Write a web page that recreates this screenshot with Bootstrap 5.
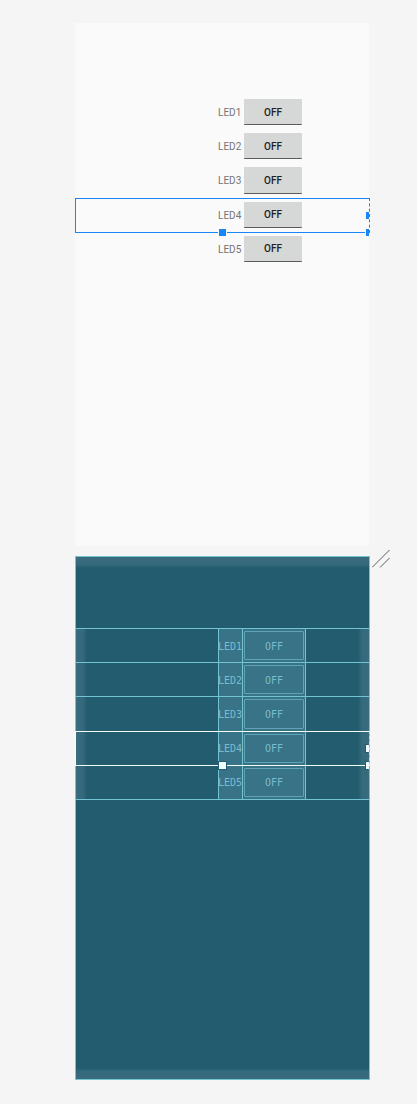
<!DOCTYPE html>
<html lang="en">
<head>
<meta charset="utf-8">
<meta name="viewport" content="width=device-width, initial-scale=1">
<title>Layout editor</title>
<link href="https://cdn.jsdelivr.net/npm/bootstrap@5.3.0/dist/css/bootstrap.min.css" rel="stylesheet">
<style>
body{background:#f5f5f5;font-family:Roboto,"Liberation Sans",sans-serif;font-size:10px;line-height:12px}
.editor{padding:23px 47px 24px 75px;gap:10px}
.surface{padding-top:72px}
.design{aspect-ratio:294/523;background:#fafafa;margin-right:1px;color:#757575}
.blueprint{aspect-ratio:295/524;background:#235c6e;border:1px solid #72c3d4;padding-top:71px;color:#78bdcd;font-family:"DejaVu Sans Mono",monospace}
.blueprint::before,.blueprint::after{content:"";position:absolute;left:0;right:0;height:11px;background:linear-gradient(#3a6b7d,#336a7c 70%,#235c6e)}
.blueprint::before{top:0}
.blueprint::after{bottom:0;transform:rotate(180deg)}
.led-rows{display:grid;grid-template-rows:repeat(5,1fr);height:171px}
.led-row{display:grid;grid-template-columns:143fr 25px 63px 63fr;position:relative;min-height:0}
.led-row label{grid-column:2;align-self:center;white-space:nowrap;padding-top:2px}
.led-row button{grid-column:3;border-radius:1px;font-size:10px;line-height:12px;padding:2px 0 0}
.design .led-row button{margin:4px 4px 4px 1px;border:0;border-bottom:1px solid #5c5a5b;background:#d6d7d7;color:#212121;font-weight:500}
.blueprint .led-rows{height:172px;border-bottom:1px solid #72c3d4}
.blueprint .led-row{border-top:1px solid #72c3d4;grid-template-columns:142fr 25px 63px 63fr;background:linear-gradient(90deg,#386c7e,#336a7c 7px,#235c6e 11px,#235c6e calc(100% - 11px),#336a7c calc(100% - 7px),#386c7e)}
.blueprint .led-row label{align-self:stretch;display:flex;align-items:center;background:#387387;box-shadow:inset 1px 0 #72c3d4,inset -1px 0 #72c3d4}
.button-cell{grid-column:3;display:grid;background:#387387;border-right:1px solid #72c3d4;padding:2px 1px}
.blueprint .led-row button{grid-column:1;background:none;border:1px solid #5fa3b5;color:inherit;font-family:inherit}
.selection{position:absolute;pointer-events:none;inset:0 -1px -1px 0;border:1px solid #1886f7;border-right-style:dashed;z-index:2}
.blueprint .selection{inset:-1px -1px -1px;border-color:#f1fcff;border-right-color:#b9e2ea}
.handle{position:absolute;width:7px;height:7px;background:#1886f7;box-shadow:0 0 0 1px #fafafa}
.blueprint .handle{background:#f1fcff;box-shadow:0 0 0 1px #235c6e}
.handle-bottom{left:50%;margin-left:-4px;bottom:-4px}
.handle-side,.handle-corner{right:0;width:3px;box-shadow:-1px 0 #fafafa}
.blueprint .handle-side,.blueprint .handle-corner{box-shadow:-1px 0 #235c6e,-1px -1px #235c6e,-1px 1px #235c6e}
.handle-side{top:50%;margin-top:-3px}
.handle-corner{bottom:-4px}
.resize{position:absolute;left:100%;top:-7px;margin-left:3px}
</style>
</head>
<body>
<main class="editor d-flex flex-column">
  <section class="surface design" aria-label="Design view">
    <div class="led-rows">
      <div class="led-row"><label for="d1">LED1</label><button id="d1" type="button">OFF</button></div>
      <div class="led-row"><label for="d2">LED2</label><button id="d2" type="button">OFF</button></div>
      <div class="led-row"><label for="d3">LED3</label><button id="d3" type="button">OFF</button></div>
      <div class="led-row"><label for="d4">LED4</label><button id="d4" type="button">OFF</button>
        <div class="selection"><span class="handle handle-bottom"></span><span class="handle handle-side"></span><span class="handle handle-corner"></span></div></div>
      <div class="led-row"><label for="d5">LED5</label><button id="d5" type="button">OFF</button></div>
    </div>
  </section>
  <section class="surface blueprint position-relative" aria-label="Blueprint view">
    <div class="led-rows">
      <div class="led-row"><label for="b1">LED1</label><div class="button-cell"><button id="b1" type="button">OFF</button></div></div>
      <div class="led-row"><label for="b2">LED2</label><div class="button-cell"><button id="b2" type="button">OFF</button></div></div>
      <div class="led-row"><label for="b3">LED3</label><div class="button-cell"><button id="b3" type="button">OFF</button></div></div>
      <div class="led-row"><label for="b4">LED4</label><div class="button-cell"><button id="b4" type="button">OFF</button></div>
        <div class="selection"><span class="handle handle-bottom"></span><span class="handle handle-side"></span><span class="handle handle-corner"></span></div></div>
      <div class="led-row"><label for="b5">LED5</label><div class="button-cell"><button id="b5" type="button">OFF</button></div></div>
    </div>
    <svg class="resize" width="18" height="18" viewBox="0 0 18 18" fill="none" stroke="#5f5f5f" aria-hidden="true"><path d="M0 17.5 17.5 0M8 17.5 17.5 8"/></svg>
  </section>
</main>
<script src="https://cdn.jsdelivr.net/npm/bootstrap@5.3.0/dist/js/bootstrap.bundle.min.js"></script>
</body>
</html>
